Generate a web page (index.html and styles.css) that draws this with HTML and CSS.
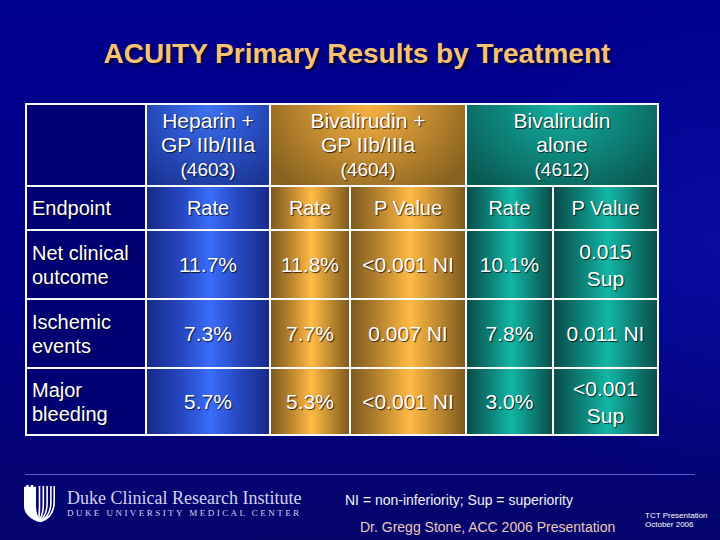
FILE: index.html
```html
<!DOCTYPE html>
<html>
<head>
<meta charset="utf-8">
<link rel="stylesheet" href="styles.css">
</head>
<body>
<div class="slide">
  <h1 class="title">ACUITY Primary Results by Treatment</h1>
  <div class="results">
    <div class="cell navy"></div>
    <div class="cell hdr blue-h"><div>Heparin +<br>GP IIb/IIIa<br><span class="n">(4603)</span></div></div>
    <div class="cell hdr gold-h span2"><div>Bivalirudin +<br>GP IIb/IIIa<br><span class="n">(4604)</span></div></div>
    <div class="cell hdr teal-h span2"><div>Bivalirudin<br>alone<br><span class="n">(4612)</span></div></div>

    <div class="cell navy label">Endpoint</div>
    <div class="cell sub blue">Rate</div>
    <div class="cell sub gold">Rate</div>
    <div class="cell sub gold">P Value</div>
    <div class="cell sub teal">Rate</div>
    <div class="cell sub teal">P Value</div>

    <div class="cell navy label"><div>Net clinical<br>outcome</div></div>
    <div class="cell val blue">11.7%</div>
    <div class="cell val gold">11.8%</div>
    <div class="cell val gold">&lt;0.001 NI</div>
    <div class="cell val teal">10.1%</div>
    <div class="cell val teal two"><div>0.015<br>Sup</div></div>

    <div class="cell navy label"><div>Ischemic<br>events</div></div>
    <div class="cell val blue">7.3%</div>
    <div class="cell val gold">7.7%</div>
    <div class="cell val gold">0.007 NI</div>
    <div class="cell val teal">7.8%</div>
    <div class="cell val teal">0.011 NI</div>

    <div class="cell navy label"><div>Major<br>bleeding</div></div>
    <div class="cell val blue">5.7%</div>
    <div class="cell val gold">5.3%</div>
    <div class="cell val gold">&lt;0.001 NI</div>
    <div class="cell val teal">3.0%</div>
    <div class="cell val teal two"><div>&lt;0.001<br>Sup</div></div>
  </div>

  <div class="rule"></div>
  <div class="footer">
    <svg class="logo" viewBox="0 0 31 37" width="31" height="37">
      <path fill="#fff" d="M0 1.8 H2.2 V0 H4.6 V1.8 H6.8 V0 H9.2 V1.8 H12 V20 C12 26 13 30 15.5 33.5 L14.5 37 C6 33.5 0 29 0 21 Z"/>
      <g fill="none" stroke="#fff" stroke-width="1.6">
        <path d="M15.5 1 V20 Q15.5 30 14.6 36"/>
        <path d="M19.3 1 V19 Q19.3 30 14.8 36.2"/>
        <path d="M23.1 1 V18 Q23.1 31 15 36.4"/>
        <path d="M26.9 1 V17 Q26.9 32 15.2 36.6"/>
        <path d="M30.2 1 V16 Q30.2 33 15.4 36.8"/>
      </g>
    </svg>
    <div class="dcri">
      <div class="dcri-name">Duke Clinical Research Institute</div>
      <div class="dcri-sub">DUKE UNIVERSITY MEDICAL CENTER</div>
    </div>
    <div class="notes">
      <div class="legend">NI = non-inferiority; Sup = superiority</div>
      <div class="source">Dr. Gregg Stone, ACC 2006 Presentation</div>
    </div>
    <div class="tct">TCT Presentation<br>October 2006</div>
  </div>
</div>
</body>
</html>
```

FILE: styles.css
```css
html, body {
  margin: 0;
  padding: 0;
}

body {
  background: #000080;
}

.slide {
  width: 720px;
  height: 540px;
  overflow: hidden;
  display: flex;
  flex-direction: column;
  font-family: "Liberation Sans", Arial, sans-serif;
  background:
    radial-gradient(ellipse 55% 65% at 100% 45%, rgba(25, 35, 200, 0.35), rgba(25, 35, 200, 0) 70%),
    linear-gradient(180deg, #00008e 0%, #000088 55%, #05056c 100%);
}

.title {
  margin: 0;
  padding: 38px 6px 0 0;
  font-size: 28px;
  line-height: 32px;
  font-weight: bold;
  text-align: center;
  color: #f9c272;
  text-shadow: 2px 2px 2px #000035;
}

.results {
  margin: 33px 0 0 25px;
  width: 630px;
  display: grid;
  grid-template-columns: 118px 122px 78px 114px 85px 103px;
  grid-template-rows: 80px 42px 67px 67px 65px;
  gap: 2px;
  padding: 2px;
  background: #fafafa;
}

.cell {
  display: flex;
  align-items: center;
  justify-content: center;
  text-align: center;
  color: #ffffff;
  text-shadow: 1px 1px 1px rgba(0, 0, 0, 0.75);
  font-size: 21px;
  line-height: 24px;
}

.span2 {
  grid-column: span 2;
}

.navy {
  background: #000072;
}

.label {
  justify-content: flex-start;
  text-align: left;
  padding-left: 5px;
  font-size: 20px;
  line-height: 24px;
}

.hdr {
  font-size: 21px;
  line-height: 24px;
}

.hdr .n {
  font-size: 19px;
}

.sub {
  font-size: 20px;
}

.val {
  font-size: 21px;
}

.val.two {
  line-height: 27px;
}

.blue-h {
  background: radial-gradient(ellipse 75% 120% at 50% 0%, #3f74f2 0%, #2c55cc 45%, #1a3392 100%);
}

.gold-h {
  background: radial-gradient(ellipse 60% 130% at 50% 0%, #f7b243 0%, #c88f33 45%, #87621f 100%);
}

.teal-h {
  background: radial-gradient(ellipse 65% 130% at 50% 0%, #13b2a3 0%, #0e8a7f 45%, #0a5852 100%);
}

.blue {
  background: linear-gradient(90deg, #172a88 0%, #2647bf 28%, #3a6cfb 52%, #2647bf 76%, #172a88 100%);
}

.gold {
  background: linear-gradient(90deg, #7c5a1f 0%, #c08a31 28%, #ffbb44 52%, #c08a31 76%, #7c5a1f 100%);
}

.teal {
  background: linear-gradient(90deg, #0a4c49 0%, #0d8378 28%, #12b6a6 52%, #0d8378 76%, #0a4c49 100%);
}

.rule {
  margin: 38px 0 0 25px;
  width: 670px;
  height: 1px;
  background: #5a5ad2;
}

.footer {
  display: flex;
  align-items: flex-start;
  padding-left: 24px;
}

.logo {
  display: block;
  margin-top: 10px;
  flex: none;
}

.dcri {
  margin: 13px 0 0 12px;
  width: 243px;
  flex: none;
  color: #d2d2ee;
  font-family: "Liberation Serif", "Times New Roman", serif;
}

.dcri-name {
  font-size: 18px;
  line-height: 20px;
  white-space: nowrap;
}

.dcri-sub {
  font-size: 9px;
  line-height: 11px;
  letter-spacing: 2.45px;
  white-space: nowrap;
}

.notes {
  margin-top: 17px;
  margin-left: 35px;
  width: 300px;
  flex: none;
  font-size: 14px;
  line-height: 17px;
}

.legend {
  color: #f2f2f2;
  white-space: nowrap;
}

.source {
  margin: 10px 0 0 15px;
  color: #e8c9b8;
  white-space: nowrap;
}

.tct {
  margin-top: 36px;
  font-size: 8px;
  line-height: 9px;
  color: #ffffff;
  white-space: nowrap;
}
```
